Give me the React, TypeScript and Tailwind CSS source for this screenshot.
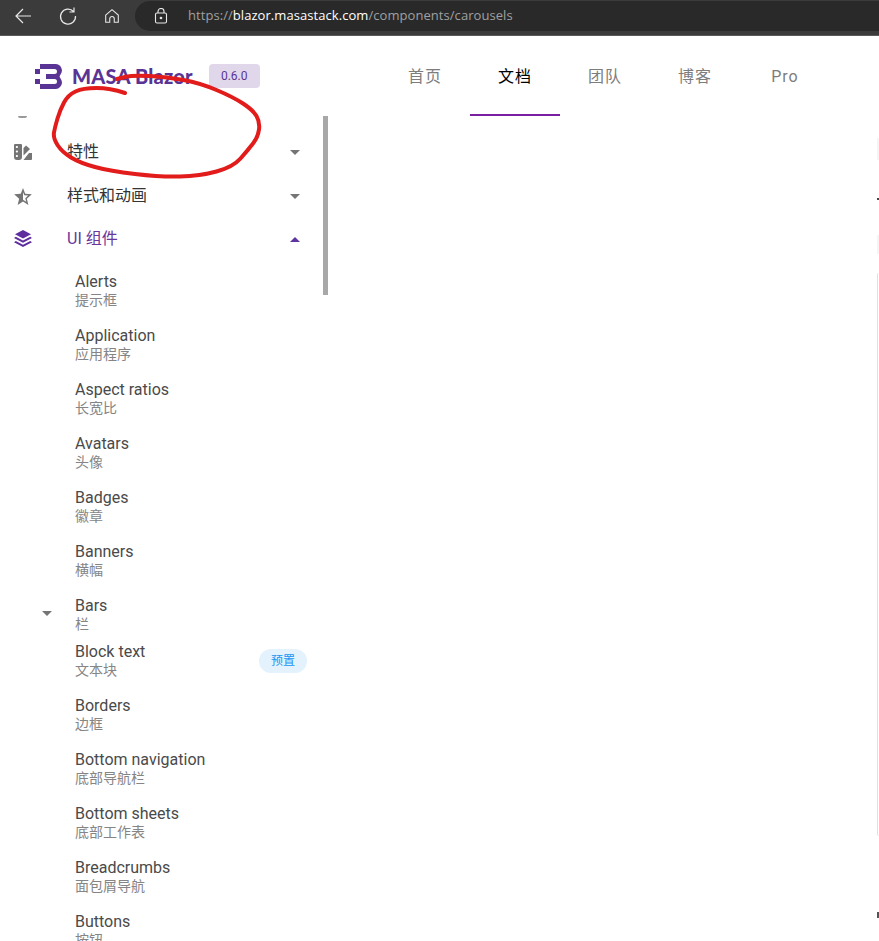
import React from "react";

const FONT = "font-['Roboto','Noto_Sans_CJK_SC',sans-serif]";

const children: [string, string][] = [
  ["Alerts", "提示框"],
  ["Application", "应用程序"],
  ["Aspect ratios", "长宽比"],
  ["Avatars", "头像"],
  ["Badges", "徽章"],
  ["Banners", "横幅"],
];
const rest: [string, string][] = [
  ["Borders", "边框"],
  ["Bottom navigation", "底部导航栏"],
  ["Bottom sheets", "底部工作表"],
  ["Breadcrumbs", "面包屑导航"],
  ["Buttons", "按钮"],
];

const circle: [number, number][] = [
  [125, 93], [110, 88], [83, 88], [68, 95], [60, 110], [55, 127], [53, 138], [62, 152], [80, 163], [110, 171],
  [160, 177], [200, 176], [233, 167], [248, 150], [258, 137], [260, 122], [253, 110], [233, 97], [200, 83],
  [167, 77], [133, 75], [117, 79],
];

function smoothPath(pts: [number, number][]) {
  let d = `M${pts[0][0]} ${pts[0][1]}`;
  for (let i = 1; i < pts.length - 1; i++) {
    const mx = (pts[i][0] + pts[i + 1][0]) / 2;
    const my = (pts[i][1] + pts[i + 1][1]) / 2;
    d += `Q${pts[i][0]} ${pts[i][1]} ${mx} ${my}`;
  }
  const last = pts[pts.length - 1];
  return d + `L${last[0]} ${last[1]}`;
}

function Caret({ up, purple }: { up?: boolean; purple?: boolean }) {
  return (
    <svg width="10" height="5" viewBox="0 0 10 5" className={purple ? "fill-[#5e35a0]" : "fill-[#757575]"}>
      <path d={up ? "M0 5 L5 0 L10 5 Z" : "M0 0 L10 0 L5 5 Z"} />
    </svg>
  );
}

function Child({ title, sub, h = "h-[54px]" }: { title: string; sub: string; h?: string }) {
  return (
    <div className={`${h} shrink-0 pl-[75px] pt-[9px]`}>
      <div className="text-[16px] leading-[18px] text-[#4a4a4a]">{title}</div>
      <div className="text-[14px] leading-[19px] text-[#858585]">{sub}</div>
    </div>
  );
}

function Swatch() {
  return (
    <svg width="18" height="16" viewBox="0 0 18 16" className="fill-[#757575]">
      <path fillRule="evenodd" d="M1 0h6a1 1 0 0 1 1 1v12a3 3 0 0 1-3 3H3a3 3 0 0 1-3-3V1a1 1 0 0 1 1-1zM4 3a1.100 1.100 0 1 0 0 .01zM4 7.500a1.100 1.100 0 1 0 0 .01zM4 12a1.100 1.100 0 1 0 0 .01z" />
      <path d="M9.500 11.500V4l2.500-2.500 4 3.500z" />
      <path d="M9.500 16l5.500-7h3v6a1 1 0 0 1-1 1z" />
    </svg>
  );
}

function Star() {
  return (
    <svg width="18" height="17" viewBox="0 0 24 23" className="fill-[#757575]">
      <path d="M12 0l3 7.900 9 .7-6.800 5.800 2.100 8.600L12 18.400l-7.300 4.600 2.100-8.600L0 8.600l9-.7zM12 5.600v10.400l4.300 2.700-1.200-5 3.900-3.400-5.200-.4z" fillRule="evenodd" />
    </svg>
  );
}

function Layers() {
  return (
    <svg width="18" height="17" viewBox="0 0 18 17" className="-mt-[2px] fill-[#5e2d9e]">
      <path d="M9 0l8 4.200-8 4.300-8-4.300z" />
      <path d="M1.800 7L0 8.200l9 4.800 9-4.800L16.200 7 9 10.800z" transform="translate(0 -.3)" />
      <path d="M1.800 11L0 12.200 9 17l9-4.800L16.200 11 9 14.800z" />
    </svg>
  );
}

function Group({ icon, label, purple, up, h }: { icon: React.ReactNode; label: string; purple?: boolean; up?: boolean; h: string }) {
  return (
    <div className={`${h} flex shrink-0 items-center`}>
      <div className="flex w-[67px] justify-start pl-[14px]">{icon}</div>
      <div className={`flex-1 text-[16px] ${purple ? "text-[#6a359c]" : "text-[#333]"}`}>{label}</div>
      <div className="flex w-[33px] justify-start"><Caret up={up} purple={purple} /></div>
    </div>
  );
}

function Tab({ label, active }: { label: string; active?: boolean }) {
  return (
    <div className={`flex h-[80px] w-[90px] items-center justify-center border-b-2 pt-[4px] text-[16px] tracking-[1px] ${active ? "border-[#7b1fa2] text-black" : "border-transparent text-[#7d7d7d]"}`}>
      {label}
    </div>
  );
}

export default function App() {
  return (
    <div className={`relative flex h-[941px] w-[879px] flex-col overflow-hidden bg-white ${FONT}`}>
      {/* browser bar */}
      <div className="flex h-[36px] shrink-0 items-start border-b border-[#5a5a5a] bg-[#3b3b3b] pt-[1px]">
        <div className="flex h-[30px] w-[135px] shrink-0 items-center gap-[25px] pl-[13px]">
          <svg width="20" height="20" viewBox="0 0 20 20" fill="none" stroke="#e8e8e8" strokeWidth="1.2"><path d="M18 10H3M10 3l-7 7 7 7" /></svg>
          <svg width="20" height="20" viewBox="0 0 20 20" fill="none" stroke="#e8e8e8" strokeWidth="1.2"><path d="M15.500 5.500A7.500 7.500 0 1 0 17.500 10M16 1.500v4.500h-4.500" /></svg>
          <svg width="18" height="18" viewBox="0 0 20 20" fill="none" stroke="#e8e8e8" strokeWidth="1.2"><path d="M3 9l7-6 7 6v8h-4.500v-4a2.500 2.500 0 0 0-5 0v4H3z" /></svg>
        </div>
        <div className="flex h-[30px] flex-1 items-center rounded-l-[15px] bg-[#292929] pl-[18px] font-['Open_Sans',sans-serif] text-[13px] tracking-[0.06px] text-[#a0a0a0]">
          <svg width="16" height="16" viewBox="0 0 16 16" fill="none" stroke="#e8e8e8" strokeWidth="1.1" className="mr-[19px]"><rect x="2.500" y="5" width="11" height="10" rx="1.500" /><path d="M5 5V3.500a3 3 0 0 1 6 0V5" /><circle cx="8" cy="10" r="0.800" fill="#e8e8e8" /></svg>
          <span>https://</span><span className="text-white">blazor.masastack.com</span><span>/components/carousels</span>
        </div>
      </div>

      {/* header */}
      <div className="flex h-[80px] shrink-0 items-center">
        <div className="flex w-[380px] shrink-0 items-center pl-[35px]">
          <svg width="27" height="25" viewBox="0 0 27 25" className="fill-[#5a3494]">
            <path d="M5 0h15.500a6.500 6.500 0 0 1 5 10.500l-1 2 1 2a6.500 6.500 0 0 1-5 10.500H5v-5h14.500a2 2 0 0 0 0-5H11v-5h8.500a2 2 0 0 0 0-5H5z" />
            <rect x="0" y="5" width="5" height="5" />
            <rect x="0" y="15" width="5" height="5" />
          </svg>
          <span className="ml-[10px] font-['Lato',sans-serif] text-[20px] font-black tracking-[0.2px] text-[#5a3494]">MASA Blazor</span>
          <span className="ml-[16px] flex h-[24px] w-[51px] items-center justify-center rounded-[4px] bg-[#e0d8ea] text-[12px] text-[#5a3494]">0.6.0</span>
        </div>
        <Tab label="首页" />
        <Tab label="文档" active />
        <Tab label="团队" />
        <Tab label="博客" />
        <Tab label="Pro" />
      </div>

      {/* body */}
      <div className="flex min-h-0 flex-1">
        <div className="flex w-[330px] shrink-0">
          <div className="flex min-w-0 flex-1 flex-col overflow-hidden">
            <div className="h-[14px] shrink-0 pl-[18px]"><div className="h-[2px] w-[9px] rounded-b-full bg-[#999]" /></div>
            <Group h="h-[44px]" icon={<Swatch />} label="特性" />
            <Group h="h-[44px]" icon={<Star />} label="样式和动画" />
            <Group h="h-[42px]" icon={<Layers />} label="UI 组件" purple up />
            <div className="h-[4px] shrink-0" />
            {children.map(([t, s]) => <Child key={t} title={t} sub={s} />)}
            <div className="relative">
              <Child title="Bars" sub="栏" h="h-[46px]" />
              <div className="absolute left-[42px] top-[23px]"><Caret /></div>
            </div>
            <div className="relative">
              <Child title="Block text" sub="文本块" />
              <span className="absolute left-[259px] top-[15px] flex h-[24px] w-[48px] items-center justify-center rounded-full bg-[#e3f2fd] text-[12px] text-[#2196f3]">预置</span>
            </div>
            {rest.map(([t, s]) => <Child key={t} title={t} sub={s} />)}
          </div>
          <div className="w-[7px] shrink-0 pr-[2px]"><div className="h-[179px] w-[5px] bg-[#a8a8a8]" /></div>
        </div>
        <div className="flex-1" />
        <div className="flex w-[2px] shrink-0 flex-col pt-[22px]">
          <div className="h-[22px] bg-[#f5f5f5]" />
          <div className="mt-[38px] h-[2px] bg-[#444]" />
          <div className="mt-[35px] h-[19px] bg-[#f5f5f5]" />
          <div className="mt-[19px] h-[563px] rounded-tl-[2px] rounded-bl-[2px] border-l border-[#e0e0e0]" />
          <div className="mt-[76px] h-[6px] bg-[#555]" />
        </div>
      </div>

      {/* red hand-drawn annotation */}
      <svg className="pointer-events-none absolute left-0 top-0" width="879" height="941" fill="none" stroke="#e21b1b" strokeWidth="4" strokeLinecap="round" strokeLinejoin="round">
        <path d={smoothPath(circle)} />
      </svg>
    </div>
  );
}
